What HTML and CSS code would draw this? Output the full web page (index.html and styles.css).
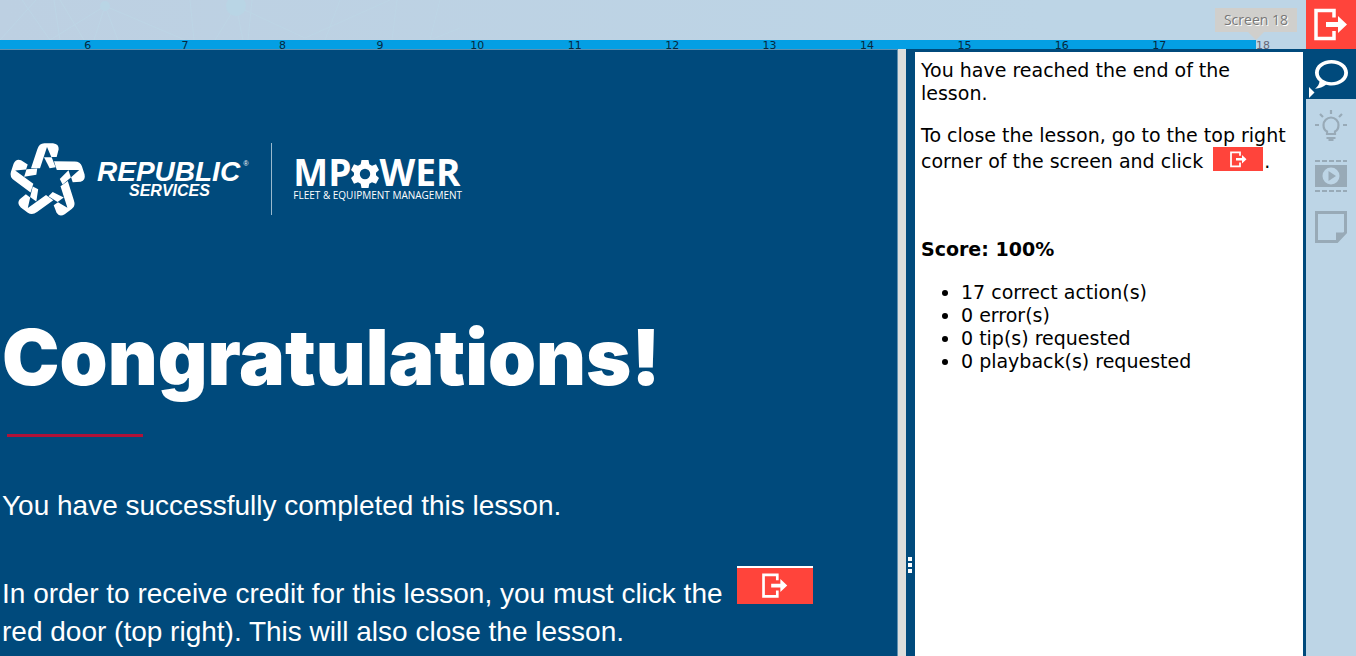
FILE: index.html
```html
<!DOCTYPE html>
<html lang="en">
<head>
<meta charset="utf-8">
<title>Lesson complete</title>
<link rel="stylesheet" href="styles.css">
</head>
<body>
<svg class="defs" aria-hidden="true">
  <symbol id="door" viewBox="0 0 34 34">
    <path fill="none" stroke="currentColor" stroke-width="3.500" d="M20 9.500V2.500H2V30.500H20V23"/>
    <path fill="currentColor" d="M12 14H24V8L33 16.500L24 25V19H12Z"/>
  </symbol>
  <symbol id="arm" viewBox="0 0 255 249" overflow="visible">
    <path d="M78 91L97 34Q102 16 118 16H144Q162 18 161 34L155 57H139L126 27L105 91Z"/>
    <path d="M117 58H140L152 88L134 91Z"/>
  </symbol>
</svg>
<div class="app">
  <main class="main">
    <header class="header">
      <div class="banner">
        <svg class="network" viewBox="0 0 460 40" aria-hidden="true">
          <g fill="none" stroke="#bdd5e5" stroke-width="1">
            <path d="M0 40L36 0M22 0L50 40L105 6L185 40M60 0L84 40M105 6L94 40M105 6L118 40M54 0L60 40M190 0L194 40M236 6L215 40M236 6L243 40M236 6L305 38L390 0M252 0L248 40M340 0L325 40M397 0L392 40M440 0L430 40L460 28"/>
          </g>
          <circle cx="105" cy="6" r="5" fill="#b9d5e5"/>
          <circle cx="236" cy="6" r="10" fill="#b9d5e5"/>
        </svg>
        <div class="tooltip">Screen 18</div>
      </div>
      <div class="progress">
        <ol class="ticks">
          <li>6</li><li>7</li><li>8</li><li>9</li><li>10</li><li>11</li><li>12</li><li>13</li><li>14</li><li>15</li><li>16</li><li>17</li>
        </ol>
        <span class="rest">18</span>
      </div>
    </header>
    <div class="body">
      <section class="slide">
        <div class="brand">
          <svg class="star" viewBox="0 0 255 249" role="img" aria-label="Republic Services star" fill="#fff">
            <use href="#arm"/>
            <use href="#arm" transform="rotate(72 127 128)"/>
            <use href="#arm" transform="rotate(144 127 128)"/>
            <use href="#arm" transform="rotate(216 127 128)"/>
            <use href="#arm" transform="rotate(288 127 128)"/>
          </svg>
          <div class="republic">
            <div class="republic-name">REPUBLIC<sup>®</sup></div>
            <div class="republic-sub">SERVICES</div>
          </div>
          <div class="mpower">
            <div class="mpower-name">MP<svg class="gear" viewBox="0 0 28 28" aria-label="O"><path fill="#fff" fill-rule="evenodd" d="M10.500 0H17.500L18.300 4.200L21 5.700L25 4.200L28 10L25 12.800V15.200L28 18L25 23.800L21 22.300L18.300 23.800L17.500 28H10.500L9.700 23.800L7 22.300L3 23.800L0 18L3 15.200V12.800L0 10L3 4.200L7 5.700L9.700 4.200ZM14 8.800A5.200 5.200 0 1 0 14 19.200A5.200 5.200 0 1 0 14 8.800Z"/></svg>WER</div>
            <div class="mpower-sub">FLEET &amp; EQUIPMENT MANAGEMENT</div>
          </div>
        </div>
        <h1 class="title">Congratulations!</h1>
        <div class="rule"></div>
        <p class="done">You have successfully completed this lesson.</p>
        <p class="credit">In order to receive credit for this lesson, you must click the <span class="badge"><svg><use href="#door"/></svg></span><br>red door (top right). This will also close the lesson.</p>
      </section>
      <div class="track"></div>
      <div class="divider"><i></i><i></i><i></i></div>
      <section class="notes">
        <p>You have reached the end of the lesson.</p>
        <p>To close the lesson, go to the top right corner of the screen and click <span class="chip"><svg><use href="#door"/></svg></span>.</p>
        <h2>Score: 100%</h2>
        <ul>
          <li>17 correct action(s)</li>
          <li>0 error(s)</li>
          <li>0 tip(s) requested</li>
          <li>0 playback(s) requested</li>
        </ul>
      </section>
    </div>
  </main>
  <nav class="rail" aria-label="Lesson tools">
    <button class="tool exit" aria-label="Close lesson"><svg class="door"><use href="#door"/></svg></button>
    <button class="tool active" aria-label="Bubble">
      <svg viewBox="0 0 50 50"><path fill="#fff" fill-rule="evenodd" d="M25.500 11C35 11 42 16.500 42 23.800S35 36.500 25.500 36.500C23.500 36.500 21.500 36.200 20 35.700C17 38 13.500 39.300 9 39.700C12 37.500 13.300 35 13.500 32.500C10.700 30.300 9 27.300 9 23.800C9 16.500 16 11 25.500 11ZM25.500 14.500C18.500 14.500 12.800 18.600 12.800 23.800S18.500 33.200 25.500 33.200S38.200 29 38.200 23.800S32.500 14.500 25.500 14.500Z"/><path fill="#fff" d="M3 38L8.500 43.500L3 49Z"/></svg>
    </button>
    <button class="tool" aria-label="Tips">
      <svg viewBox="0 0 50 50" fill="none" stroke="currentColor" stroke-width="2.200"><path d="M21 34V31.500C18 30 17.500 27.500 17.500 25A7.500 7.500 0 1 1 32.500 25C32.500 27.500 32 30 29 31.500V34Z"/><path d="M20.500 38H29.500M22.500 40H27.500M25 10V14M14 14L17 17M36 14L33 17M9 25H13M37 25H41"/></svg>
    </button>
    <button class="tool" aria-label="Playback">
      <svg viewBox="0 0 50 50"><path fill="currentColor" fill-rule="evenodd" d="M9 14H41V36H9ZM25 16.500A8.500 8.500 0 1 0 25 33.500A8.500 8.500 0 1 0 25 16.500ZM22.500 20L30 25L22.500 30Z"/><path d="M9 10H41M9 40H41" stroke="currentColor" stroke-width="2" stroke-dasharray="5 2"/></svg>
    </button>
    <button class="tool" aria-label="Notes">
      <svg viewBox="0 0 50 50"><path fill="none" stroke="currentColor" stroke-width="3" d="M10.500 10.500H39.500V30.500L31 39.500H10.500Z"/><path fill="currentColor" d="M30 41V30.500H41L30 41Z"/></svg>
    </button>
  </nav>
</div>
</body>
</html>
```
FILE: styles.css
```css
* { box-sizing: border-box; }
body { margin: 0; background: #004a7c; overflow: hidden; }
.defs { display: none; }
.app { display: flex; height: 100vh; }
.main { flex: 1; min-width: 0; display: flex; flex-direction: column; }
.header { background: linear-gradient(90deg, #bdd0e2, #bdd5e6 80%); }
.banner { position: relative; height: 40px; }
.network { display: block; width: 460px; height: 40px; }
.tooltip {
  position: absolute; right: 9px; top: 8px; padding: 0 9px;
  font: 14px/24px "Open Sans", sans-serif; color: #777; background: #d0cfcc;
  text-shadow: 1px 1px 0 #fff;
}
.tooltip::after {
  content: ""; position: absolute; left: 50%; top: 100%; margin-left: -8px;
  border: 8px solid transparent; border-top-color: #d0cfcc; border-bottom: 0;
}
.progress { display: flex; height: 9px; font: 11px/11px "DejaVu Sans", sans-serif; }
.ticks {
  flex: 1; display: grid; grid-template-columns: repeat(12, 1fr); margin: 0;
  padding: 0 48px 0 39px; list-style: none; text-align: center;
  background: #049fe4; color: #06283d;
}
.rest { width: 50px; color: #667; }
.body { flex: 1; min-height: 0; display: flex; }
.slide {
  flex: 1; min-width: 0; padding: 91px 0 0 2px; overflow: hidden;
  border-top: 1px solid #5f90b0; color: #fff;
  font: 28px/38px "Liberation Sans", Arial, sans-serif;
}
.brand { display: flex; align-items: center; height: 76px; padding-left: 3px; }
.star { width: 85px; height: 83px; }
.republic { padding-left: 7px; font-weight: bold; font-style: italic; white-space: nowrap; }
.republic-name { display: flex; font-size: 28px; line-height: 24px; }
.republic-name sup { padding-left: 3px; font-size: 7px; font-weight: normal; line-height: 8px; }
.republic-sub { padding-left: 32px; font-size: 16px; line-height: 14px; }
.mpower {
  margin-left: 23px; padding: 11px 0 13px 21px; border-left: 1px solid #9ab9cd;
  font-family: "Open Sans", sans-serif; white-space: nowrap;
}
.mpower-name { font-size: 37px; line-height: 35px; font-weight: bold; }
.gear { width: 28px; height: 28px; vertical-align: -2px; }
.mpower-sub { font-size: 10px; line-height: 13px; }
.title { margin: 95px 0 0; font: 900 77px/90px "Arial Black", Inter, sans-serif; }
.rule { width: 136px; height: 3px; margin: 32px 0 0 5px; background: #b01238; }
.done { margin: 50px 0 0; }
.credit { margin: 50px 0 0; white-space: nowrap; }
.badge {
  display: inline-flex; justify-content: center; align-items: center;
  width: 76px; height: 38px; margin: -10px 0 -10px 7px; vertical-align: 4px;
  border-top: 2px solid #fff; background: #ff443b;
}
.badge svg { width: 26px; height: 26px; }
.track { width: 9px; background: #dcdedc; border-left: 1px solid #5f90b0; }
.divider {
  width: 9px; display: flex; flex-direction: column; gap: 2px; align-items: flex-start;
  padding: 508px 0 0 2px; background: #004a7c;
}
.divider i { width: 4px; height: 4px; background: #fff; }
.notes {
  width: 391px; padding: 7px 6px 0; border: solid #004a7c; border-width: 3px 3px 0 0;
  background: #fff; color: #000; font: 19px/23px Verdana, "DejaVu Sans", sans-serif;
}
.notes p { margin: 0 0 19px; }
.chip {
  display: inline-flex; justify-content: center; align-items: center;
  width: 50px; height: 24px; margin: 0 1px 0 4px; vertical-align: bottom; background: #ff443b; color: #fff;
  vertical-align: 0;
}
.chip svg { width: 17px; height: 17px; }
.notes h2 { margin: 65px 0 20px; font-size: 19px; line-height: 23px; }
.notes ul { margin: 0; padding-left: 40px; }
.rail { width: 50px; background: #bdd5e6; }
.tool {
  display: block; width: 50px; height: 51px; padding: 0; border: 0;
  background: none; color: #98aab7;
}
.tool svg { display: block; width: 50px; height: 50px; }
.exit { height: 49px; padding: 7px 8px; background: #ff443b; color: #fff; }
.tool .door { width: 34px; height: 34px; }
.active { height: 50px; background: #004a7c; }
```
